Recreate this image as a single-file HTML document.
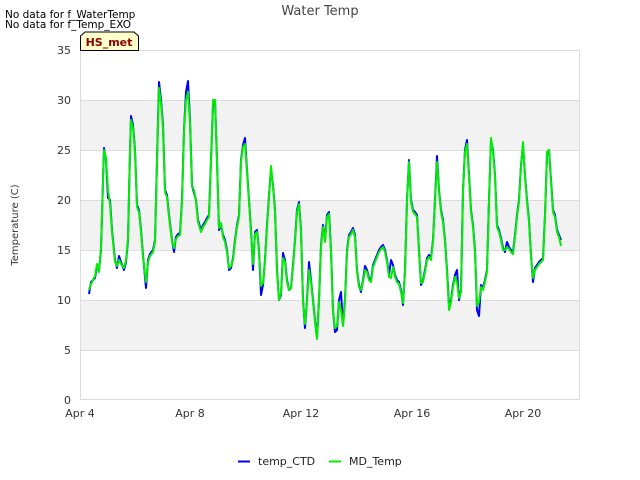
<!DOCTYPE html>
<html><head><meta charset="utf-8"><style>
html,body{margin:0;padding:0;background:#fff;}
svg{display:block;font-family:"DejaVu Sans","Liberation Sans",sans-serif;}
</style></head><body>
<svg width="640" height="480" viewBox="0 0 640 480" xmlns="http://www.w3.org/2000/svg">
<rect width="640" height="480" fill="#fff"/>
<rect x="80" y="100" width="500" height="50" fill="#f2f2f2"/>
<rect x="80" y="200" width="500" height="50" fill="#f2f2f2"/>
<rect x="80" y="300" width="500" height="50" fill="#f2f2f2"/>
<g stroke="#dcdcdc" stroke-width="1">
<line x1="80" y1="50.5" x2="580" y2="50.5"/>
<line x1="80" y1="100.5" x2="580" y2="100.5"/>
<line x1="80" y1="150.5" x2="580" y2="150.5"/>
<line x1="80" y1="200.5" x2="580" y2="200.5"/>
<line x1="80" y1="250.5" x2="580" y2="250.5"/>
<line x1="80" y1="300.5" x2="580" y2="300.5"/>
<line x1="80" y1="350.5" x2="580" y2="350.5"/>
<line x1="80.5" y1="50" x2="80.5" y2="400"/>
<line x1="579.5" y1="50" x2="579.5" y2="400"/>
<line x1="80" y1="399.5" x2="580" y2="399.5"/>
</g>
<g font-size="11" fill="#333" text-anchor="end">
<text x="71" y="54">35</text><text x="71" y="104">30</text><text x="71" y="154">25</text>
<text x="71" y="204">20</text><text x="71" y="254">15</text><text x="71" y="304">10</text>
<text x="71" y="354">5</text><text x="71" y="404">0</text>
</g>
<g font-size="11" fill="#333" text-anchor="middle">
<text x="80" y="417">Apr 4</text><text x="190" y="417">Apr 8</text>
<text x="301" y="417">Apr 12</text><text x="412" y="417">Apr 16</text>
<text x="523" y="417">Apr 20</text>
</g>
<text x="18" y="225" font-size="10" fill="#333" text-anchor="middle" transform="rotate(-90 18 225)">Temperature (C)</text>
<text x="320" y="15" font-size="13" fill="#444" text-anchor="middle">Water Temp</text>
<text x="5" y="18" font-size="10.5" fill="#000">No data for f_WaterTemp</text>
<text x="5" y="28" font-size="10.5" fill="#000">No data for f_Temp_EXO</text>
<path d="M80.5,50.5 L80.5,36 L85,32 L134,32 L138.5,36 L138.5,50.5 Z" fill="#ffffcc" stroke="#000" stroke-width="1"/>
<text x="109" y="46" font-size="11" font-weight="bold" fill="#8b0000" text-anchor="middle">HS_met</text>
<polyline fill="none" stroke="#0000ff" stroke-width="2" stroke-linejoin="round" points="89,294 91,282 95,278 97,266 99,270 101,250 103,180 104,148 106,160 108,198 110,200 112,230 115,260 117,268 119,256 121,262 124,270 126,262 128,240 130,150 131,116 133,125 135,150 137,205 139,210 141,230 143,255 146,288 148,260 150,254 153,250 155,240 157,160 159,82 161,100 163,125 165,190 167,195 169,215 172,240 174,252 176,237 178,234 180,233 182,200 184,130 186,92 188,81 190,120 192,185 194,193 196,200 198,220 201,230 203,225 205,222 207,218 209,215 211,160 213,105 215,100 217,160 219,230 221,225 223,235 225,240 227,250 229,270 231,268 233,258 235,240 237,225 239,215 241,160 243,145 245,138 247,170 249,200 251,230 253,270 255,232 257,230 259,250 261,295 263,285 265,260 267,225 269,195 271,170 273,185 275,210 277,270 279,300 281,295 283,253 285,260 287,280 289,290 291,288 293,265 295,240 297,210 299,202 301,230 303,300 305,328 307,300 309,262 311,280 313,300 315,320 317,338 319,300 321,245 323,225 325,240 327,215 329,212 331,250 333,310 335,332 337,330 339,300 341,292 343,325 345,300 347,250 349,235 351,232 353,228 355,235 357,270 359,285 361,292 363,280 365,266 367,270 369,278 371,280 373,265 375,260 377,255 379,250 381,247 383,245 385,250 387,260 389,275 391,260 393,265 395,275 397,280 399,282 401,290 403,305 405,270 407,200 409,160 411,200 413,210 415,212 417,215 419,250 421,285 423,280 425,270 427,258 429,255 431,258 433,240 435,200 437,156 439,190 441,210 443,220 445,240 447,270 449,305 451,300 453,285 455,275 457,270 459,300 461,290 463,190 465,150 467,140 469,175 471,210 473,225 475,250 477,310 479,316 481,285 483,288 485,280 487,270 489,200 491,140 493,150 495,175 497,225 499,230 501,238 503,248 505,252 507,242 509,247 511,250 513,252 515,235 517,215 519,200 521,165 523,145 525,175 527,200 529,220 531,255 533,282 535,268 537,265 539,262 541,260 543,258 545,215 547,155 549,150 551,180 553,210 555,215 557,230 559,235 561,240"/>
<polyline fill="none" stroke="#00ee00" stroke-width="2" stroke-linejoin="round" points="89,290 91,284 95,276 97,264 99,272 101,248 103,182 104,150 106,158 108,190 110,204 112,232 115,262 117,266 119,260 121,264 124,268 126,260 128,238 130,152 131,120 133,128 135,152 137,207 139,212 141,232 143,257 146,282 148,262 150,256 153,252 155,242 157,162 159,88 161,104 163,128 165,192 167,197 169,217 172,242 174,248 176,239 178,236 180,235 182,202 184,132 186,100 188,92 190,124 192,187 194,190 196,202 198,222 201,232 203,227 205,224 207,220 209,217 211,162 213,100 215,100 217,162 219,228 221,223 223,237 225,242 227,252 229,268 231,266 233,260 235,242 237,227 239,217 241,162 243,147 245,144 247,172 249,202 251,232 253,264 255,234 257,232 259,252 261,286 263,283 265,262 267,227 269,197 271,166 273,187 275,212 277,272 279,300 281,293 283,258 285,262 287,282 289,290 291,288 293,267 295,242 297,212 299,204 301,232 303,302 305,324 307,302 309,270 311,282 313,302 315,322 317,339 319,302 321,247 323,227 325,242 327,217 329,214 331,252 333,312 335,328 337,326 339,302 341,310 343,326 345,302 347,252 349,237 351,234 353,230 355,237 357,272 359,287 361,290 363,282 365,270 367,272 369,280 371,282 373,267 375,262 377,257 379,252 381,249 383,247 385,252 387,262 389,277 391,278 393,267 395,277 397,282 399,284 401,292 403,303 405,272 407,202 409,162 411,202 413,212 415,214 417,217 419,252 421,283 423,282 425,272 427,260 429,257 431,260 433,242 435,202 437,162 439,192 441,212 443,222 445,242 447,272 449,310 451,302 453,287 455,277 457,282 459,298 461,292 463,192 465,152 467,144 469,177 471,212 473,227 475,252 477,306 479,302 481,287 483,290 485,282 487,272 489,202 491,138 493,152 495,177 497,227 499,232 501,240 503,250 505,250 507,247 509,249 511,252 513,254 515,237 517,217 519,202 521,167 523,142 525,177 527,202 529,222 531,257 533,278 535,270 537,267 539,264 541,262 543,260 545,217 547,152 549,150 551,182 553,212 555,217 557,232 559,237 561,246"/>
<line x1="238" y1="461.5" x2="250" y2="461.5" stroke="#0000ff" stroke-width="2"/>
<text x="258" y="465" font-size="11" fill="#222">temp_CTD</text>
<line x1="329" y1="461.5" x2="341" y2="461.5" stroke="#00ee00" stroke-width="2"/>
<text x="349" y="465" font-size="11" fill="#222">MD_Temp</text>
</svg>
</body></html>
